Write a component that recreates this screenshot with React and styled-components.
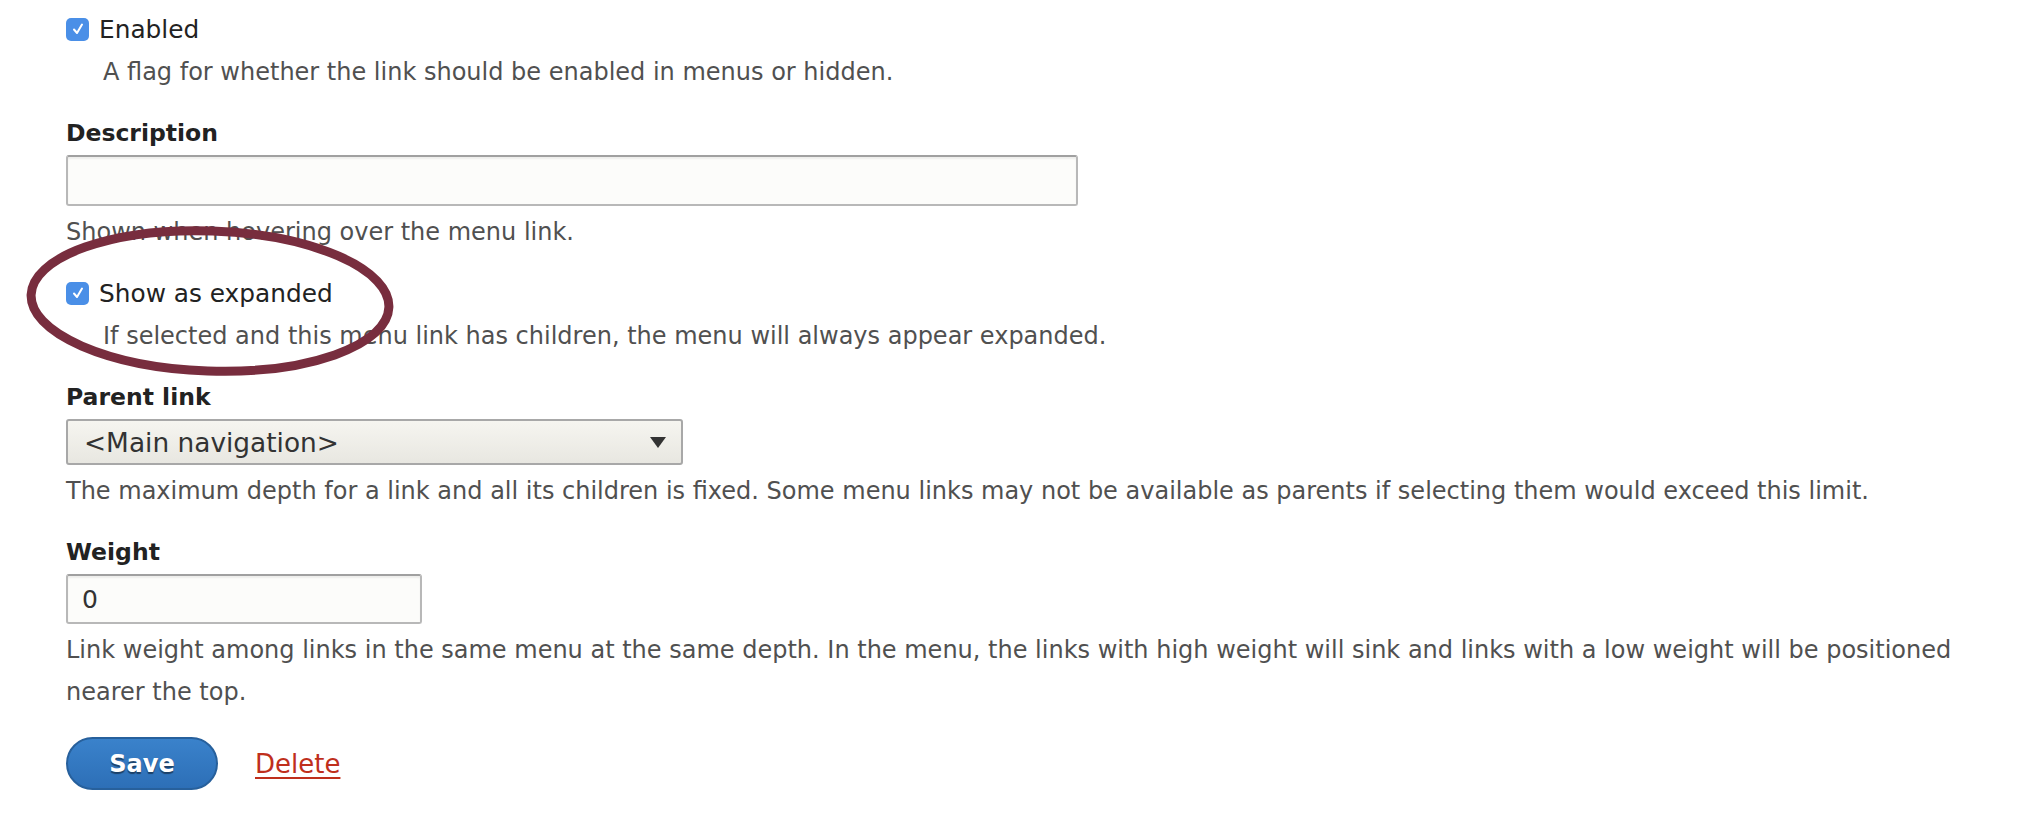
import React from "react";
import styled, { createGlobalStyle } from "styled-components";

const GlobalStyle = createGlobalStyle`
  html, body {
    margin: 0;
    padding: 0;
    background: #fff;
  }
  body {
    font-family: "DejaVu Sans", "Liberation Sans", sans-serif;
    color: #222;
  }
`;

const Page = styled.form`
  position: relative;
  padding: 12px 40px 40px 66px;
  display: flex;
  flex-direction: column;
`;

const FormItem = styled.div`
  display: flex;
  flex-direction: column;
  margin-top: ${(p) => (p.$first ? 0 : "23px")};
`;

const CheckRow = styled.label`
  display: flex;
  align-items: center;
  gap: 10px;
  height: 34px;
  font-size: 24.8px;
  color: #222;
`;

const Box = styled.span`
  width: 23px;
  height: 23px;
  border-radius: 5px;
  background: #4a8fe7;
  display: inline-flex;
  align-items: center;
  justify-content: center;
  flex-shrink: 0;
`;

const Label = styled.label`
  font-size: 23.5px;
  font-weight: 700;
  line-height: 34px;
  color: #222;
  margin-bottom: 5px;
`;

const Help = styled.div`
  font-size: 24px;
  line-height: 42px;
  color: #505050;
  margin-top: 5px;
  padding-left: ${(p) => (p.$indent ? "37px" : 0)};
`;

const TextInput = styled.div`
  box-sizing: border-box;
  width: ${(p) => p.$width}px;
  height: ${(p) => p.$height}px;
  border: 2px solid #b8b8b8;
  border-top-color: #a0a0a0;
  border-radius: 3px;
  background: #fcfcfa;
  box-shadow: inset 0 2px 2px rgba(0, 0, 0, 0.06);
  padding: 0 14px;
  display: flex;
  align-items: center;
  font-size: 25px;
  color: #333;
`;

const Select = styled.div`
  box-sizing: border-box;
  width: 617px;
  height: 46px;
  border: 2px solid #a8a8a8;
  border-radius: 3px;
  background: linear-gradient(#f6f5f0, #e8e7e1);
  padding: 0 15px 0 16px;
  display: flex;
  align-items: center;
  justify-content: space-between;
  font-size: 26.4px;
  color: #333;
`;

const Actions = styled.div`
  display: flex;
  align-items: center;
  gap: 37px;
  margin-top: 24px;
`;

const SaveButton = styled.button`
  width: 152px;
  height: 53px;
  border-radius: 27px;
  border: 2px solid #27609c;
  background: linear-gradient(#3a82cb, #2d6fb7);
  color: #fff;
  font-family: "DejaVu Sans", "Liberation Sans", sans-serif;
  font-size: 24px;
  font-weight: 700;
  text-shadow: 0 2px 1px rgba(0, 0, 0, 0.45);
`;

const DeleteLink = styled.a`
  font-size: 26px;
  color: #bf2f1c;
  text-decoration: underline;
  text-underline-offset: 4px;
`;

const Annotation = styled.svg`
  position: absolute;
  left: 0;
  top: 0;
  pointer-events: none;
`;

const Check = () => (
  <svg width="14" height="14" viewBox="0 0 14 14">
    <path d="M3 7.5 L6 11 L11 2.5" fill="none" stroke="#fff" strokeWidth="2" strokeLinecap="round" strokeLinejoin="round" />
  </svg>
);

const Checkbox = ({ label }) => (
  <CheckRow>
    <Box>
      <Check />
    </Box>
    {label}
  </CheckRow>
);

const App = () => {
  return (
    <>
      <GlobalStyle />
      <Page>
        <FormItem $first>
          <Checkbox label="Enabled" />
          <Help $indent>A flag for whether the link should be enabled in menus or hidden.</Help>
        </FormItem>

        <FormItem>
          <Label>Description</Label>
          <TextInput $width={1012} $height={51} />
          <Help>Shown when hovering over the menu link.</Help>
        </FormItem>

        <FormItem>
          <Checkbox label="Show as expanded" />
          <Help $indent>
            If selected and this menu link has children, the menu will always appear expanded.
          </Help>
        </FormItem>

        <FormItem>
          <Label>Parent link</Label>
          <Select>
            <span>&lt;Main navigation&gt;</span>
            <svg width="16" height="11" viewBox="0 0 16 11">
              <path d="M0 0 H16 L8 11 Z" fill="#333" />
            </svg>
          </Select>
          <Help>
            The maximum depth for a link and all its children is fixed. Some menu links may not be
            available as parents if selecting them would exceed this limit.
          </Help>
        </FormItem>

        <FormItem>
          <Label>Weight</Label>
          <TextInput $width={356} $height={50}>0</TextInput>
          <Help>
            Link weight among links in the same menu at the same depth. In the menu, the links with
            high weight will sink and links with a low weight will be positioned nearer the top.
          </Help>
        </FormItem>

        <Actions>
          <SaveButton type="button">Save</SaveButton>
          <DeleteLink href="#">Delete</DeleteLink>
        </Actions>

        <Annotation width="2018" height="830">
          <ellipse cx="210" cy="301" rx="179" ry="70" fill="none" stroke="#782d3e" strokeWidth="9" transform="rotate(2 210 301)" />
        </Annotation>
      </Page>
    </>
  );
};

export default App;
